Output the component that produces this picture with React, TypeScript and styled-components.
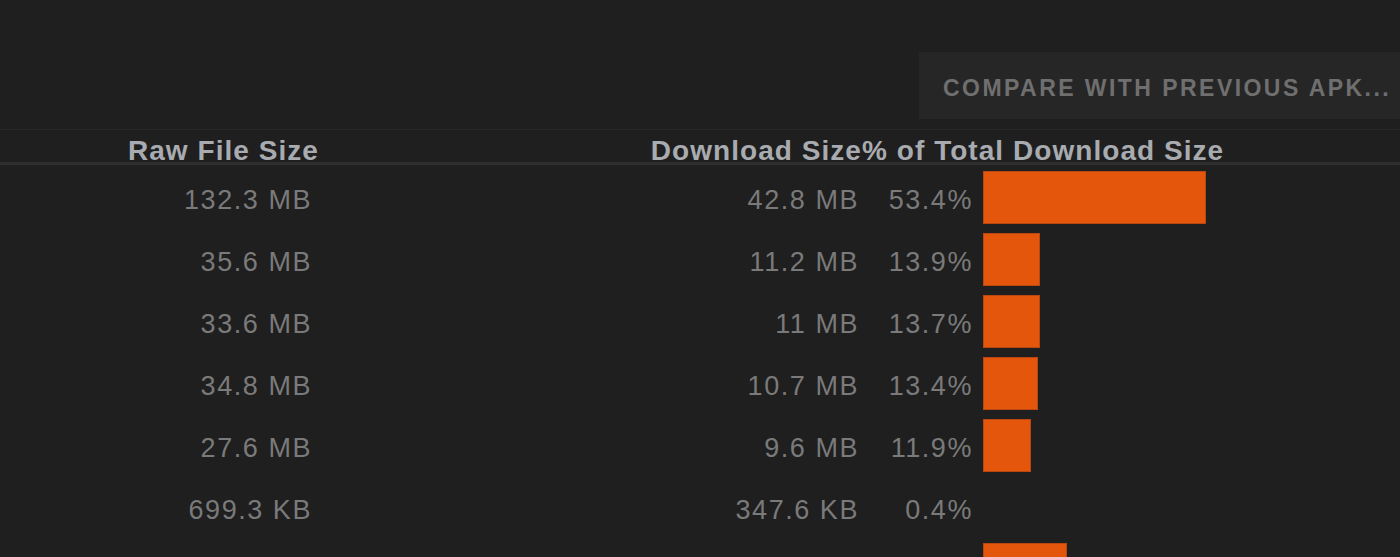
import React from "react";
import styled, { createGlobalStyle } from "styled-components";

const Global = createGlobalStyle`
  html, body { margin: 0; padding: 0; background: #1f1f1f; }
  body { font-family: "Liberation Sans", Arial, sans-serif; overflow: hidden; }
`;

const Page = styled.div`
  width: 1400px;
  height: 557px;
  background: #1f1f1f;
  overflow: hidden;
`;

const Toolbar = styled.div`
  height: 130px;
  display: flex;
  justify-content: flex-end;
  align-items: flex-start;
  padding-top: 52px;
  box-sizing: border-box;
  border-bottom: 1px solid #282828;
`;

const CompareButton = styled.button`
  width: 481px;
  height: 67px;
  background: #262626;
  border: none;
  margin: 0;
  padding: 6px 0 0 24px;
  box-sizing: border-box;
  text-align: left;
  color: #6f6f6f;
  font-family: "Liberation Sans", Arial, sans-serif;
  font-weight: 700;
  font-size: 23px;
  letter-spacing: 2.45px;
  white-space: nowrap;
  overflow: hidden;
`;

const Grid = styled.div`
  display: grid;
  grid-template-columns: 320px 542px 118px 1fr;
`;

const HeaderCell = styled.div<{ $pr?: number; $span?: number; $align?: string }>`
  grid-column: span ${(p) => p.$span ?? 1};
  height: 32px;
  display: flex;
  align-items: flex-end;
  justify-content: ${(p) => p.$align ?? "flex-end"};
  padding-right: ${(p) => p.$pr ?? 0}px;
  color: #a8abaf;
  font-weight: 700;
  font-size: 28px;
  line-height: 23px;
  letter-spacing: 1.05px;
  white-space: nowrap;
  border-bottom: 3px solid #2e2e2e;
`;

const Cell = styled.div<{ $pr: number }>`
  height: 62px;
  display: flex;
  align-items: center;
  justify-content: flex-end;
  padding-right: ${(p) => p.$pr}px;
  padding-top: 6px;
  box-sizing: border-box;
  color: #7a7a7a;
  font-size: 27px;
  letter-spacing: 1.55px;
  white-space: nowrap;
`;

const BarCell = styled.div`
  height: 62px;
  display: flex;
  align-items: center;
  padding-left: 3px;
`;

const Bar = styled.div`
  height: 53px;
  background: #e5560d;
  border: 1px solid #b9470f;
  box-sizing: border-box;
`;

const Spacer = styled.div`
  grid-column: 1 / -1;
  height: 1px;
`;

const data = [
  { raw: "132.3 MB", dl: "42.8 MB", pct: "53.4%", w: 223 },
  { raw: "35.6 MB", dl: "11.2 MB", pct: "13.9%", w: 57 },
  { raw: "33.6 MB", dl: "11 MB", pct: "13.7%", w: 57 },
  { raw: "34.8 MB", dl: "10.7 MB", pct: "13.4%", w: 55 },
  { raw: "27.6 MB", dl: "9.6 MB", pct: "11.9%", w: 48 },
  { raw: "699.3 KB", dl: "347.6 KB", pct: "0.4%", w: 0 },
  { raw: "", dl: "", pct: "", w: 84 },
];

export default function App() {
  return (
    <Page>
      <Global />
      <Toolbar>
        <CompareButton>COMPARE WITH PREVIOUS APK...</CompareButton>
      </Toolbar>
      <Grid>
        <HeaderCell $pr={1}>Raw File Size</HeaderCell>
        <HeaderCell>Download Size</HeaderCell>
        <HeaderCell $span={2} $align="flex-start">% of Total Download Size</HeaderCell>
        <Spacer />
        {data.map((r, i) => (
          <React.Fragment key={i}>
            <Cell $pr={8}>{r.raw}</Cell>
            <Cell $pr={3}>{r.dl}</Cell>
            <Cell $pr={7}>{r.pct}</Cell>
            <BarCell>{r.w > 0 && <Bar style={{ width: r.w }} />}</BarCell>
          </React.Fragment>
        ))}
      </Grid>
    </Page>
  );
}
